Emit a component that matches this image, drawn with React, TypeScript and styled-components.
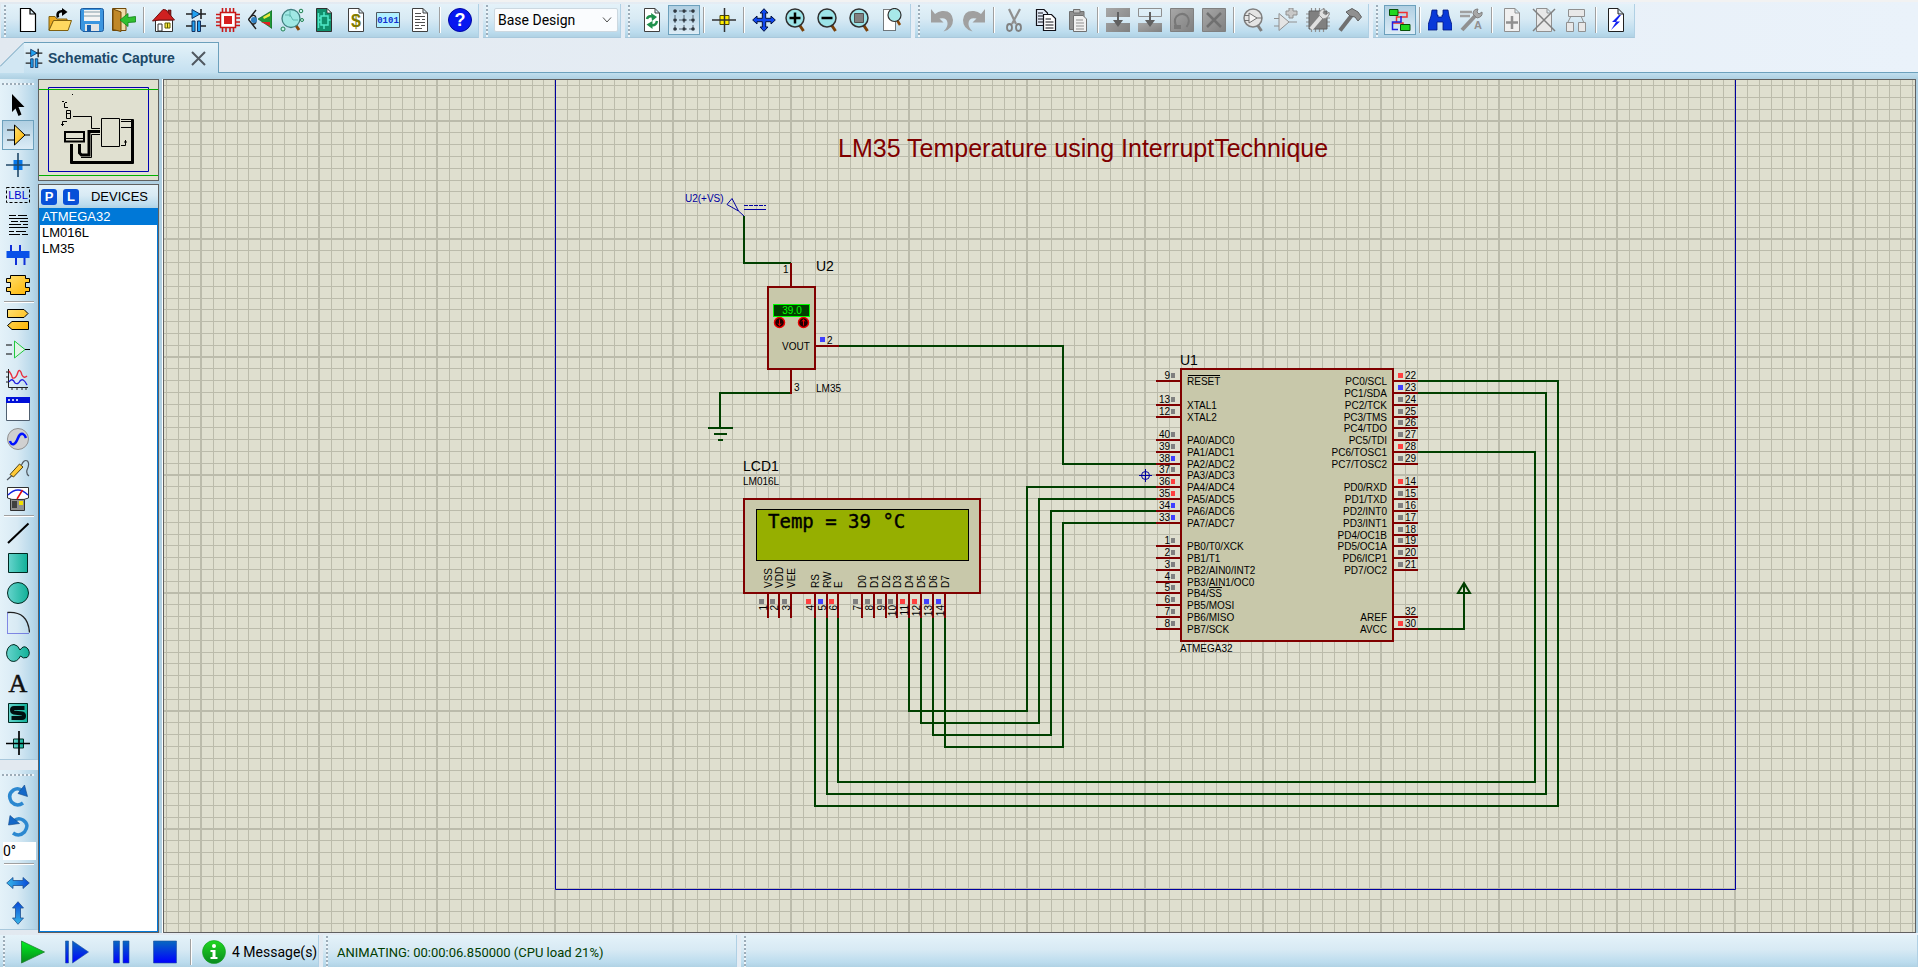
import React from "react";
import styled, { createGlobalStyle, css } from "styled-components";

const UI = `"Roboto", "Open Sans", sans-serif`;
const ARIAL = `"Liberation Sans", Arial, sans-serif`;
const WIRE = "#004000";
const PIN = "#800000";
const BODY = "#c8c8aa";
const MARK = "#0000a0";

const GlobalStyle = createGlobalStyle`
  * { box-sizing: border-box; }
  html, body { margin: 0; padding: 0; }
  body { background: #e3eaf1; font-family: ${UI}; color: #000; }
  button, input, select { font: inherit; color: inherit; margin: 0; }
`;

/* ---------- icons ---------- */

const Glyph = styled.svg`
  display: block;
  flex: none;
`;

type IconProps = { children: React.ReactNode; size?: number };
const Icon = ({ children, size = 24 }: IconProps) => (
  <Glyph width={size} height={size} viewBox="0 0 24 24" fill="none" aria-hidden="true">
    {children}
  </Glyph>
);

const HiddenDefs = styled.svg`
  position: absolute;
`;

const Defs = () => (
  <HiddenDefs width="0" height="0" aria-hidden="true">
    <defs>
      <linearGradient id="gold" x1="0" y1="0" x2="1" y2="1">
        <stop offset="0" stopColor="#ffe070" />
        <stop offset="1" stopColor="#ffb400" />
      </linearGradient>
      <linearGradient id="teal" x1="0" y1="0" x2="1" y2="0">
        <stop offset="0" stopColor="#66d4cc" />
        <stop offset="1" stopColor="#10b098" />
      </linearGradient>
      <linearGradient id="azure" x1="0" y1="0" x2="1" y2="0">
        <stop offset="0" stopColor="#38b8e8" />
        <stop offset="1" stopColor="#0848d8" />
      </linearGradient>
      <linearGradient id="azureUp" x1="0" y1="1" x2="0" y2="0">
        <stop offset="0" stopColor="#38b8e8" />
        <stop offset="1" stopColor="#0848d8" />
      </linearGradient>
      <linearGradient id="play" x1="0" y1="0" x2="0" y2="1">
        <stop offset="0" stopColor="#00f020" />
        <stop offset="1" stopColor="#08881c" />
      </linearGradient>
      <linearGradient id="blue" x1="0" y1="0" x2="0" y2="1">
        <stop offset="0" stopColor="#0868c0" />
        <stop offset="1" stopColor="#0000ff" />
      </linearGradient>
      <linearGradient id="info" x1="0" y1="0" x2="0" y2="1">
        <stop offset="0" stopColor="#20d820" />
        <stop offset="1" stopColor="#0a8a20" />
      </linearGradient>
      <linearGradient id="grey" x1="0" y1="0" x2="1" y2="1">
        <stop offset="0" stopColor="#a8a8a8" />
        <stop offset="1" stopColor="#808080" />
      </linearGradient>
    </defs>
  </HiddenDefs>
);

const Sheet = ({ stroke = "#404040", fill = "#fff" }) => (
  <path d="M4.500 .5H15L19.500 5V23.500H4.500ZM15 .5V5H19.500" fill={fill} stroke={stroke} />
);

const Lens = ({ fill = "#9ce4e8", stroke = "#303030", handle = "#7a4008" }) => (
  <>
    <path d="M15.500 17L19.500 23" stroke={handle} strokeWidth="3" />
    <circle cx="11" cy="10" r="9" fill={fill} stroke={stroke} strokeWidth="1.500" />
  </>
);

const icons: Record<string, React.ReactNode> = {
  newFile: <path d="M4.500 .5H14L19.500 6V23.500H4.500ZM14 .5V6H19.500" fill="#fff" stroke="#000" strokeWidth="1.200" />,
  open: (
    <>
      <path d="M1 22V8.500H7L9 11H19V13H5.500Z" fill="#e8a820" stroke="#806010" />
      <path d="M1 22.500L5.500 12.500H23.500L20 22.500Z" fill="#ffd860" stroke="#806010" />
      <path d="M10 9.500C8.500 5 11 2.500 15.500 3.500" stroke="#000" strokeWidth="2.500" />
      <path d="M14 0L19.500 4L14 8Z" fill="#000" />
    </>
  ),
  save: (
    <>
      <path d="M.5 2.500Q.5 .5 2.500 .5H21.500Q23.500 .5 23.500 2.500V21.500Q23.500 23.500 21.500 23.500H3L.5 21Z" fill="#3c96e0" stroke="#1c5ca0" />
      <path d="M4 2H20V13H4Z" fill="#f4f4f4" />
      <path d="M4 4H20M4 8H20" stroke="#a8b8c0" strokeWidth="1.500" />
      <path d="M5 16H19V23H5Z" fill="#e4e4e4" />
      <path d="M7 17H11V23H7Z" fill="#1860b0" />
    </>
  ),
  exit: (
    <>
      <path d="M.5 .5H14V22.500H.5Z" fill="#f0dca8" stroke="#704808" />
      <path d="M1 1L9 4V23.500L1 21.500Z" fill="#c08828" stroke="#704808" />
      <path d="M8 12L16 5.500V9.500L23.500 8.500V14L16 14.500V18.500Z" fill="#30c030" stroke="#108018" strokeWidth=".8" />
    </>
  ),
  home: (
    <>
      <path d="M16 2H19V9H16Z" fill="#902020" stroke="#400" strokeWidth=".6" />
      <path d="M3.500 12H20.500V23.500H3.500Z" fill="#fff" stroke="#303030" />
      <path d="M.5 13L11 1.500L14 2L22.500 12H7Z" fill="#d02020" stroke="#701010" />
      <path d="M6 16H10V23H6Z" fill="#fff" stroke="#303030" />
      <path d="M13 15H18V20H13ZM15.500 15V20" fill="#f8e840" stroke="#606000" />
    </>
  ),
  schematic: (
    <>
      <path d="M2 6H22M2 18H8.500M16 18H22" stroke="#202020" strokeWidth="1.500" />
      <path d="M8 1.500L16 6L8 10.500Z" fill="#20a0f0" stroke="#103060" />
      <path d="M17 1V11" stroke="#202020" strokeWidth="1.600" />
      <path d="M8 13H11V23.500H8ZM13.500 13H16.500V23.500H13.500Z" fill="#20a0f0" stroke="#103060" />
    </>
  ),
  chip: (
    <>
      <path d="M6.500 0V24M10 0V24M14 0V24M17.500 0V24M0 6.500H24M0 10H24M0 14H24M0 17.500H24" stroke="#c81818" strokeWidth="1.600" />
      <path d="M4.500 4.500H19.500V19.500H4.500Z" fill="#fff" stroke="#c81818" strokeWidth="1.500" />
      <path d="M8 8H16V16H8Z" fill="#d82020" />
    </>
  ),
  view3d: (
    <>
      <path d="M8 2L.5 11.500L8 21M3 8.500Q8 5 8 12Q8 18 3 15" stroke="#202020" strokeWidth="1.400" />
      <circle cx="6" cy="12" r="3" fill="#3080c0" />
      <path d="M10 11L24 2.500V20.500Z" fill="#209838" stroke="#0c5018" strokeWidth=".6" />
      <path d="M15 9L22 5V8L16 11Z" fill="#f0e840" />
      <path d="M13 14H22V18Z" fill="#e02020" />
    </>
  ),
  gerber: (
    <>
      <path d="M15 16L19 22" stroke="#8a4808" strokeWidth="3" />
      <circle cx="11" cy="10.500" r="9" fill="#a0e8e4" stroke="#408080" strokeWidth="1.300" />
      <path d="M5 7H10L13 12H18M10 3V9" stroke="#60b8b0" />
      <g fill="#c8f4ec" stroke="#208050">
        <circle cx="3" cy="21" r="2" />
        <circle cx="21" cy="3" r="1.800" />
        <circle cx="22" cy="12" r="1.500" />
      </g>
    </>
  ),
  pcb: (
    <>
      <path d="M4.500 .5H15L19.500 5V23.500H4.500Z" fill="#10906c" stroke="#303030" />
      <path d="M15 .5V5H19.500Z" fill="#fff" stroke="#303030" strokeWidth=".8" />
      <path d="M9 8H16V17H9ZM6.500 5V20M9 10H6.500M9 14H6.500M12 8V4M12 17V21M16 12H18.500" stroke="#50e8c8" strokeWidth="1.500" />
    </>
  ),
  bom: (
    <>
      <Sheet />
      <text x="12" y="19" textAnchor="middle" fontFamily="Liberation Sans" fontWeight="700" fontSize="18" fill="#847c00">$</text>
    </>
  ),
  source: (
    <>
      <path d="M.5 4.500H23.500V19.500H.5Z" fill="#b0f0ff" stroke="#505860" />
      <text x="12" y="15" textAnchor="middle" fontFamily="Liberation Mono" fontWeight="700" fontSize="9" fill="#1030d0">0101</text>
    </>
  ),
  report: (
    <>
      <Sheet />
      <path d="M7 5.500H13M7 8.500H17M7 11.500H12M14 11.500H17M7 14.500H17M7 17.500H11M13 17.500H17M7 20.500H14" stroke="#505050" />
    </>
  ),
  help: (
    <>
      <circle cx="12" cy="12" r="11.500" fill="#0818f0" stroke="#0008a0" />
      <text x="12" y="18" textAnchor="middle" fontFamily="Liberation Sans" fontWeight="700" fontSize="18" fill="#fff">?</text>
    </>
  ),
  refresh: (
    <>
      <Sheet />
      <path d="M7 11Q8 7.500 12 8.500M17 13Q16 18 11.500 17" stroke="#20904c" strokeWidth="2.500" />
      <path d="M11 5L17 9L12 13ZM12.500 13L6.500 16.500L12.500 21Z" fill="#20904c" />
    </>
  ),
  grid: (
    <>
      <path d="M2 3H22M2 12H22M2 21H22M3 2V22M12 2V22M21 2V22" stroke="#506070" strokeDasharray="3 2" />
      <g fill="#303840">
        {[3, 12, 21].map((x) => [3, 12, 21].map((y) => <circle key={`${x}-${y}`} cx={x} cy={y} r="1.800" />))}
      </g>
    </>
  ),
  origin: (
    <>
      <path d="M8 7.500H17V16.500H8Z" fill="#ffee00" stroke="#504800" />
      <path d="M0 12H24M12.500 0V24" stroke="#303030" strokeWidth="1.500" />
    </>
  ),
  pan: <path d="M12 .7L16 5H13.700V10.300H19V8L23.300 12L19 16V13.700H13.700V19H16L12 23.300L8 19H10.300V13.700H5V16L.7 12L5 8V10.300H10.300V5H8Z" fill="#1048f0" stroke="#001040" />,
  zoomIn: (
    <>
      <Lens />
      <path d="M5.500 10H16.500M11 4.500V15.500" stroke="#000" strokeWidth="2.500" />
    </>
  ),
  zoomOut: (
    <>
      <Lens />
      <path d="M5.500 10H16.500" stroke="#000" strokeWidth="2.500" />
    </>
  ),
  zoomAll: (
    <>
      <Lens />
      <path d="M6.500 5.500H15.500V14.500H6.500Z" fill="#808080" stroke="#505050" />
    </>
  ),
  zoomArea: (
    <>
      <path d="M3.500 1.500H15.500V22.500H3.500Z" fill="#fff" stroke="#000" strokeDasharray="1 1" />
      <path d="M17 12L20 17" stroke="#8a4808" strokeWidth="2.500" />
      <circle cx="14.500" cy="7" r="6.500" fill="#a8e8e8" stroke="#303030" strokeWidth="1.200" />
    </>
  ),
  undo: <path d="M1 1V14.500H13.500L9.500 10.500Q17 9 17.500 15Q18 19 13.500 23.500Q23 21 23 12Q22 2 12 3Q8 3.500 5 6Z" fill="#a0a0a0" />,
  redo: <path d="M23 1V14.500H10.500L14.500 10.500Q7 9 6.500 15Q6 19 10.500 23.500Q1 21 1 12Q2 2 12 3Q16 3.500 19 6Z" fill="#a0a0a0" />,
  cut: (
    <>
      <path d="M7 1L14 16M18 1L10 16" stroke="#909090" strokeWidth="2.200" />
      <ellipse cx="7.500" cy="19.500" rx="2.500" ry="3.500" stroke="#808080" strokeWidth="1.800" />
      <ellipse cx="16.500" cy="19.500" rx="2.500" ry="3.500" stroke="#808080" strokeWidth="1.800" />
    </>
  ),
  copy: (
    <>
      <path d="M2.500 1.500H10L13.500 5V17.500H2.500Z" fill="#e4ecf8" stroke="#101018" strokeWidth="1.200" />
      <path d="M4 5H9M4 8H9M4 11H9M4 14H9" stroke="#101018" />
      <path d="M9.500 6.500H17.500L21.500 10.500V22.500H9.500Z" fill="#fff" stroke="#101018" strokeWidth="1.200" />
      <path d="M11.500 11H17M11.500 14H19.500M11.500 17H19.500M11.500 20H19.500" stroke="#101018" />
    </>
  ),
  paste: (
    <>
      <path d="M3.500 3.500H18V21.500H3.500Z" fill="#909090" stroke="#707070" />
      <path d="M7.500 1.500H14V5H7.500Z" fill="#c0c0c0" stroke="#707070" />
      <path d="M7.500 7.500H17L20.500 11V23.500H7.500Z" fill="#f0f0f0" stroke="#707070" />
      <path d="M10 12H17M10 15H18M10 18H18M10 21H18" stroke="#909090" />
    </>
  ),
  blockCopy: (
    <>
      <path d="M0 0H24V9H0ZM0 15H24V24H0Z" fill="url(#grey)" />
      <path d="M12 4V14" stroke="#606060" strokeWidth="2" />
      <path d="M7 12H17L12 19Z" fill="#606060" />
    </>
  ),
  blockMove: (
    <>
      <path d="M.5 .5H23.500V8.500H.5Z" stroke="#909090" />
      <path d="M0 15H24V24H0Z" fill="url(#grey)" />
      <path d="M12 4V14" stroke="#606060" strokeWidth="2" />
      <path d="M7 12H17L12 19Z" fill="#606060" />
    </>
  ),
  blockRotate: (
    <>
      <path d="M.5 .5H23.500V23.500H.5Z" fill="url(#grey)" stroke="#808080" />
      <path d="M7 19.500Q3 13 6.500 8.500Q12 3.500 17 8Q21 13 16.500 19" stroke="#787878" strokeWidth="2" />
      <path d="M4 17H11V21H4Z" fill="#787878" />
    </>
  ),
  blockDelete: (
    <>
      <path d="M.5 .5H23.500V23.500H.5Z" fill="url(#grey)" stroke="#808080" />
      <path d="M5 5L19 19M19 5L5 19" stroke="#707070" strokeWidth="2.500" />
    </>
  ),
  pick: (
    <>
      <Lens fill="#e4e4e4" stroke="#808080" handle="#808080" />
      <path d="M7 5V15L15 10ZM2 7.500H7M2 12.500H7M15 10H20" fill="#f4f4f4" stroke="#707070" />
    </>
  ),
  make: (
    <>
      <path d="M5 5.500V22.500L15 14ZM0 10.500H5M0 18H5M15 14H23" fill="#e4e4e4" stroke="#909090" />
      <path d="M15 0H19V3H23V7H19V10H15V7H12V3H15Z" fill="#c8c8c8" stroke="#909090" />
    </>
  ),
  packaging: (
    <>
      <path d="M5.500 0V24M9.500 0V24M13.500 0V24M17.500 0V24M0 6H24M0 10H24M0 14H24M0 18H24" stroke="#909090" strokeWidth="1.200" />
      <path d="M3 3H21V21H3Z" fill="#808080" stroke="#606060" />
      <path d="M5 21L16 8" stroke="#e0e0e0" strokeWidth="4" />
      <path d="M13 7Q13 1 19 1L17 5L20 7L23 4Q24 10 17 11Z" fill="#e0e0e0" stroke="#909090" />
    </>
  ),
  hammer: (
    <>
      <path d="M2 22.500L14 7" stroke="#707070" strokeWidth="4" />
      <path d="M8 4L14 .5L20 4L23.500 9L20 13L17 9L12 8Z" fill="#909090" stroke="#606060" />
    </>
  ),
  autoroute: (
    <>
      <path d="M9 4.500H19V9H8.500V14M4 15H15V19" stroke="#f03030" strokeWidth="1.500" />
      <path d="M13 8V14H4.500V21.500H10" stroke="#2020e0" strokeWidth="1.500" />
      <path d="M1.500 1.500H10V7.500H1.500ZM12.500 16.500H22V22.500H12.500Z" fill="#20d820" stroke="#085008" />
    </>
  ),
  search: (
    <path d="M4 2H9V7H10V9H14V7H15V2H20L21 8L24 17V22H15V14H9V22H0V17L3 8Z" fill="#0838d8" stroke="#001880" strokeWidth=".8" />
  ),
  property: (
    <>
      <path d="M0 4H12M0 8H10" stroke="#a0a0a0" strokeWidth="2.500" />
      <path d="M2 22L16 7" stroke="#909090" strokeWidth="4" />
      <path d="M13 6Q13 1 18 1L17 4L19 6L22 4Q23 9 17 10Z" fill="#a8a8a8" stroke="#808080" />
      <text x="18" y="21" textAnchor="middle" fontFamily="Liberation Sans" fontWeight="700" fontSize="11" fill="#909090">A</text>
    </>
  ),
  sheetAdd: (
    <>
      <Sheet stroke="#909090" fill="#f0f0f0" />
      <path d="M12 8V21M6 14.500H18" stroke="#909090" strokeWidth="2.500" />
    </>
  ),
  sheetRemove: (
    <>
      <Sheet stroke="#909090" fill="#e8e8e8" />
      <path d="M1 1L23 23M23 1L1 23" stroke="#808080" strokeWidth="1.500" />
    </>
  ),
  hierarchy: (
    <g fill="#e8e8e8" stroke="#909090">
      <path d="M7 8L3.500 15M17 8L20 15" />
      <path d="M4.500 1.500H20.500V8.500H4.500ZM2.500 14.500H9.500V23.500H2.500ZM14.500 14.500H21.500V23.500H14.500Z" />
    </g>
  ),
  erc: (
    <>
      <path d="M4.500 .5H14L19.500 6V23.500H4.500ZM14 .5V6H19.500" fill="#fff" stroke="#202020" />
      <path d="M15 7L8 14H12L7 22L16 13.500H12L17 7Z" fill="#1020f0" />
    </>
  ),
  pointer: <path d="M6 1L18.500 14H12.500L15.500 21.500L12.500 23L9.500 15.500L6 19Z" fill="#000" />,
  component: (
    <>
      <path d="M1 7H8M1 17H8M19 12H24" stroke="#000" />
      <path d="M8.500 2V22L19 12Z" fill="url(#gold)" stroke="#000" />
    </>
  ),
  junction: (
    <>
      <path d="M7.500 7H16.500V17H7.500Z" fill="#0878e8" />
      <path d="M0 12H24M12 0V24" stroke="#204868" strokeWidth="1.600" />
    </>
  ),
  label: (
    <>
      <path d="M.5 4.500H23.500V19.500H.5Z" stroke="#000" strokeDasharray="3 2" />
      <text x="12" y="16" textAnchor="middle" fontFamily="Liberation Sans" fontSize="11" fill="#0000d0">LBL</text>
    </>
  ),
  script: <path d="M3 2.500H10M12 2.500H21M3 5.500H22M5 8.500H12M14 8.500H22M3 11.500H15M17 11.500H22M3 14.500H22M3 18.500H8M10 18.500H20M3 21.500H14M16 21.500H22" stroke="#000" />,
  bus: (
    <>
      <path d="M5 2V9M14 2V9M10 15V22M18.500 15V22" stroke="#1030d8" strokeWidth="2" />
      <path d="M.5 8H23.500V15H.5Z" fill="#0850e8" />
    </>
  ),
  subcircuit: <path d="M4.500 2.500H19.500V5.500H23.500V9.500H19.500V14.500H23.500V18.500H19.500V21.500H4.500V18.500H.5V14.500H4.500V9.500H.5V5.500H4.500Z" fill="url(#gold)" stroke="#000" />,
  terminal: (
    <path d="M1.500 2.500H18L22 6.500L18 10.500H1.500ZM22.500 14.500H6L1.500 18.500L6 22.500H22.500Z" fill="url(#gold)" stroke="#000" />
  ),
  devicePin: (
    <>
      <path d="M0 8H6M0 17H6M19 12.500H24" stroke="#000" />
      <path d="M8.500 4V21L19 12.500Z" fill="#e0f4e8" stroke="#20c840" />
    </>
  ),
  graph: (
    <>
      <path d="M2.500 2V20.500H22M0 5H3M0 10H3M0 15H3M6 20V23M11 20V23M16 20V23M20 20V23" stroke="#202020" />
      <path d="M3 4Q6 8 6.500 11Q10 12 12 5Q14 1 16 8Q18 12 21 9" stroke="#e83040" strokeWidth="1.400" />
      <path d="M3 15Q6 10 9 16Q12 18 14 14Q17 10 21 18" stroke="#2020e0" strokeWidth="1.400" />
    </>
  ),
  popup: (
    <>
      <path d="M.5 .5H23.500V23.500H.5Z" fill="#fff" stroke="#506070" />
      <path d="M0 0H24V6H0Z" fill="#0010d8" />
      <g fill="#fff">
        <circle cx="3" cy="3" r="1" />
        <circle cx="7" cy="3" r="1" />
        <circle cx="11" cy="3" r="1" />
      </g>
    </>
  ),
  generator: (
    <>
      <circle cx="12" cy="12" r="10.500" fill="#d0d0d0" stroke="#909090" />
      <path d="M4 14Q5 18 8 17Q10 16 12 11Q14 6 17 7Q19 8 20 11" stroke="#0010ff" strokeWidth="2.500" />
    </>
  ),
  probe: (
    <>
      <path d="M4 17.500L13.500 7L17 10L7.500 20Z" fill="url(#gold)" stroke="#504010" />
      <path d="M1 23L6 18.500M15.500 8Q18 2 21.500 4Q24 7 21 13Q20 17 23 19" stroke="#505860" strokeWidth="1.200" />
    </>
  ),
  instrument: (
    <>
      <path d="M4.500 11H18.500V23.500H4.500Z" fill="#909090" stroke="#303030" />
      <path d="M1.500 .5H22.500V11Q19 13 12 12.500Q5 13 1.500 11Z" fill="#fff" stroke="#303030" />
      <path d="M2 8Q12 -2 22 8" stroke="#1020e0" strokeWidth="1.300" />
      <path d="M11 12L16.500 3" stroke="#e81010" strokeWidth="1.500" />
      <path d="M6 14H11V21H6Z" fill="#404040" />
      <path d="M13 14H17V18H13Z" fill="#f0e000" />
    </>
  ),
  line: <path d="M2 22L22.500 2.500" stroke="#000" strokeWidth="2" />,
  box: <path d="M2.500 2.500H21.500V21.500H2.500Z" fill="url(#teal)" stroke="#002820" />,
  circle: <circle cx="12" cy="12" r="10.500" fill="url(#teal)" stroke="#002820" />,
  arc: (
    <>
      <path d="M1.500 1.500V22.500H23" stroke="#2020d0" strokeDasharray="1 1" />
      <path d="M1.500 1.500Q22 0 23.500 21.500" stroke="#202020" strokeWidth="1.300" />
    </>
  ),
  path2d: <path d="M14 9Q18 3 22 8Q25 13 21 16.500Q17 18 14.500 15Q11 22 5 20Q0 17 .7 11Q2 4 8 3.500Q12 4 14 9Z" fill="url(#teal)" stroke="#002820" />,
  text: <text x="12" y="21" textAnchor="middle" fontFamily="Liberation Serif" fontSize="26" stroke="#101010" strokeWidth=".5" fill="#101010">A</text>,
  symbol: (
    <>
      <path d="M2.500 2.500H21.500V21.500H2.500Z" fill="url(#teal)" stroke="#002820" />
      <path d="M18.500 7H8Q6 7 6 9Q6 11 8 11.500L16 12.500Q18 13 18 15Q18 17 16 17H5.500" stroke="#001010" strokeWidth="4" />
    </>
  ),
  marker: (
    <>
      <path d="M7.500 8H17.500V17H7.500Z" fill="url(#teal)" stroke="#002820" />
      <path d="M0 12.500H24M13 0V24" stroke="#000" strokeWidth="1.700" />
    </>
  ),
  rotateCw: (
    <>
      <path d="M17 19Q11 23.500 5.500 18Q1 10.500 7.500 6Q12 3 17 7" stroke="#2c88d0" strokeWidth="3.500" />
      <path d="M18.500 1L21.500 12.500L12 9.500Z" fill="#1468c8" stroke="#104888" strokeWidth=".6" />
    </>
  ),
  rotateCcw: (
    <>
      <path d="M7 19Q13 23.500 18.500 18Q24 10.500 17 6Q12 3 8 7" stroke="#2c88d0" strokeWidth="3.500" />
      <path d="M4 1.500L2.500 11L13.500 9.500Z" fill="#1468c8" stroke="#104888" strokeWidth=".6" />
    </>
  ),
  mirrorX: <path d="M.7 12L7 6.500V9.500H17V6.500L23.300 12L17 17.500V14.500H7V17.500Z" fill="url(#azure)" stroke="#205090" strokeWidth=".8" />,
  mirrorY: <path d="M12 .7L6.500 7H9.500V17H6.500L12 23.300L17.500 17H14.500V7H17.500Z" fill="url(#azureUp)" stroke="#205090" strokeWidth=".8" />,
  play: <path d="M.5 1L23.500 12L.5 23Z" fill="url(#play)" stroke="#208030" strokeWidth=".8" />,
  step: <path d="M.5 1H3.500V23H.5ZM7.500 1L23.500 12L7.500 23Z" fill="url(#blue)" stroke="#2050a0" strokeWidth=".6" />,
  pause: <path d="M4.500 1H10.500V23H4.500ZM14 1H20V23H14Z" fill="url(#blue)" stroke="#2050a0" strokeWidth=".6" />,
  stop: <path d="M.5 1H23.500V23H.5Z" fill="url(#blue)" stroke="#2050a0" strokeWidth=".6" />,
  info: (
    <>
      <circle cx="12" cy="12" r="11.500" fill="url(#info)" stroke="#10a020" strokeWidth=".6" />
      <circle cx="12" cy="6" r="2" fill="#fff" />
      <path d="M8.500 10H13.500V17H15.500V19H8.500V17H10.500V12H8.500Z" fill="#fff" />
    </>
  ),
};

/* ---------- chrome ---------- */

const Shell = styled.div`
  display: flex;
  flex-direction: column;
  min-height: 100vh;
  background: linear-gradient(90deg, #e2e9f0, #eaf2fa);
`;

const horizontalSheen = css`
  background: linear-gradient(180deg, #e4f2f9 0%, #d8eaf4 45%, #bcdcee 85%, #b0d2e4 100%);
`;

const TopBars = styled.header`
  display: flex;
  gap: 4px;
  padding: 2px 0 4px 1px;
  border-top: 2px solid #f2f2f2;
`;

const Bar = styled.div`
  display: flex;
  align-items: flex-start;
  height: 34px;
  padding: 1px 2px 0 0;
  border-right: 1px solid #b0d0e4;
  border-bottom: 1px solid #a8c8dc;
  ${horizontalSheen}
`;

const Grip = styled.span`
  flex: none;
  width: 2px;
  height: 32px;
  margin: 0 6px 0 3px;
  background: repeating-linear-gradient(180deg, #9cacb8 0 2px, #eef5fa 2px 4px);
`;

const Divider = styled.span`
  flex: none;
  width: 2px;
  height: 26px;
  margin: 2px 3px;
  background: linear-gradient(90deg, #a0a0a0 50%, #fff 50%);
`;

const ToolButton = styled.button<{ $active?: boolean; $wide?: boolean }>`
  flex: none;
  display: flex;
  align-items: center;
  justify-content: center;
  width: ${(p) => (p.$wide ? 44 : 32)}px;
  height: 30px;
  padding: 0;
  border: 1px solid ${(p) => (p.$active ? "#6ca0bc" : "transparent")};
  background: ${(p) => (p.$active ? "linear-gradient(180deg, #b0cfe2, #dcecf6)" : "none")};
`;

const DesignSelect = styled.span`
  position: relative;
  display: block;
  margin-top: 3px;

  select {
    appearance: none;
    width: 124px;
    height: 24px;
    padding: 0 3px;
    border: 1px solid #ccd8e0;
    border-radius: 2px;
    background: #fafcfe;
    font-size: 14px;
  }
  svg {
    position: absolute;
    right: 6px;
    top: 8px;
    pointer-events: none;
  }
`;

const Tool = ({ name, active }: { name: string; active?: boolean }) => (
  <ToolButton type="button" aria-label={name} aria-pressed={active} $active={active}>
    <Icon>{icons[name]}</Icon>
  </ToolButton>
);

const renderTools = (names: string[], active?: string) =>
  names.map((n, i) => (n === "|" ? <Divider key={i} /> : <Tool key={i} name={n} active={n === active ? true : undefined} />));

const fileTools = ["newFile", "open", "save", "exit", "|", "home", "schematic", "chip", "view3d", "gerber", "pcb", "bom", "source", "report", "|", "help"];
const viewTools = ["refresh", "grid", "|", "origin", "|", "pan", "zoomIn", "zoomOut", "zoomAll", "zoomArea"];
const editTools = ["undo", "redo", "|", "cut", "copy", "paste", "|", "blockCopy", "blockMove", "blockRotate", "blockDelete", "|", "pick", "make", "packaging", "hammer"];
const designTools = ["autoroute", "|", "search", "property", "|", "sheetAdd", "sheetRemove", "hierarchy", "|", "erc"];

const TabRow = styled.nav`
  display: flex;
  height: 31px;
`;

const Tab = styled.div`
  display: flex;
  align-items: center;
  gap: 4px;
  padding: 0 11px 1px 0;
  border-top: 1px solid #6ca0bc;
  border-right: 1px solid #6ca0bc;
  background: linear-gradient(180deg, #e4f2f9, #c4e0f0);
  color: #1c4868;
  font: bold 14px ${ARIAL};
`;

const TabClose = styled.button`
  display: flex;
  padding: 0;
  margin-left: 10px;
  border: 0;
  background: none;
`;

const TabRest = styled.div`
  flex: 1;
  border-bottom: 1px solid #6ca0bc;
`;

const Strip = styled.div`
  height: 6px;
  background: linear-gradient(180deg, #c0deee, #aed0e2);
`;

const Workspace = styled.main`
  flex: 1;
  display: flex;
  padding-right: 2px;
  background: #b0d0e2;
`;

const SideTools = styled.div`
  display: flex;
  flex-direction: column;
  gap: 10px;
  width: 38px;
  background: #e2e9f0;
`;

const SideBar = styled.div`
  display: flex;
  flex-direction: column;
  padding: 0 4px 1px 2px;
  border-bottom: 1px solid #a8c8dc;
  background: linear-gradient(90deg, #e4f2f9 0%, #d8eaf4 45%, #b8d8ea 85%, #acccdf 100%);
`;

const SideGrip = styled.span`
  height: 2px;
  margin: 4px 0 5px;
  background: repeating-linear-gradient(90deg, #9cacb8 0 2px, #eef5fa 2px 4px);
`;

const SideDivider = styled.span<{ $tall?: boolean }>`
  height: 2px;
  margin: ${(p) => (p.$tall ? 3 : 1)}px 0;
  margin-left: 2px;
  background: linear-gradient(180deg, #a0a0a0 50%, #fff 50%);
`;

const AngleInput = styled.input`
  width: 33px;
  height: 18px;
  margin: 1px 0 0 1px;
  padding: 0;
  border: 0;
  background: #fff;
  font-size: 14px;
`;

const SidePanels = styled.aside`
  display: flex;
  flex-direction: column;
  gap: 3px;
  width: 121px;
`;

const Overview = styled.div`
  height: 102px;
  border: 1px solid #606060;
  background: #e0e0d0;

  svg {
    display: block;
  }
`;

const Devices = styled.section`
  flex: 1;
  display: flex;
  flex-direction: column;
  border: 1px solid #606060;
  font-family: ${ARIAL};
  font-size: 13px;
`;

const DevicesHead = styled.div`
  display: flex;
  align-items: center;
  gap: 6px;
  height: 23px;
  padding: 0 10px 0 2px;
  ${horizontalSheen}

  h2 {
    flex: 1;
    margin: 0;
    font: 13px ${ARIAL};
    text-align: right;
  }
`;

const LetterButton = styled.button`
  width: 16px;
  height: 16px;
  padding: 0;
  border: 0;
  border-radius: 3px;
  background: #0850d8;
  color: #fff;
  font: bold 13px/16px ${ARIAL};
`;

const DeviceList = styled.ul`
  flex: 1;
  margin: 0;
  padding: 0;
  list-style: none;
  border: 1px solid #0078d7;
  background: #fff;
`;

const DeviceItem = styled.li<{ $selected?: boolean }>`
  height: 16px;
  padding-left: 2px;
  line-height: 16px;
  background: ${(p) => (p.$selected ? "#0078d7" : "none")};
  color: ${(p) => (p.$selected ? "#fff" : "#000")};
`;

const Canvas = styled.section`
  flex: 1;
  min-width: 0;
  display: flex;
  margin-left: 4px;
  border: 1px solid #606060;
  box-shadow: -1px 0 #fff;
  background: #dfdfcf;

  svg {
    flex: 1;
    display: block;
    font-family: ${ARIAL};
    font-size: 10px;
  }
`;

const StatusRow = styled.footer`
  display: flex;
  gap: 4px;
  height: 34px;
  padding-top: 2px;
`;

const StatusBar = styled.div<{ $width?: number }>`
  display: flex;
  align-items: center;
  flex: ${(p) => (p.$width ? `0 0 ${p.$width}px` : "1")};
  padding-top: 2px;
  border-right: 1px solid #b0d0e4;
  ${horizontalSheen}
`;

const MessageButton = styled.button`
  display: flex;
  align-items: center;
  gap: 6px;
  padding: 0 0 0 7px;
  border: 0;
  background: none;
  font-size: 14px;
  white-space: nowrap;
`;

const SimText = styled.output`
  padding-left: 3px;
  color: #003c00;
  font-size: 13px;
  white-space: nowrap;
`;

/* ---------- overview thumbnail ---------- */

const OverviewMap = () => (
  <svg width="119" height="100" viewBox="39 80 119 100" fill="none" role="img" aria-label="Sheet overview">
    <path d="M48.500 87.500H148.500V171.500H48.500Z" stroke="#0000b0" />
    <path d="M39 89.500H158M39 175.500H158" stroke="#00b000" />
    <g stroke="#000">
      <path d="M72 94.500H73M62 101.500H64M65 102.500H67M64.500 103V107.500H68M66.500 110.500H70.500V118.500H66.500ZM67 113.500H70M73 116.500H91.500V128.500H100M67 121.500H62.500V126M61 124.500H64" />
      <path d="M65 132H84V141.500H65Z" strokeWidth="2" />
      <path d="M65 138.500H84M101.500 118.500H119.500V146.500H101.500Z" />
      <path d="M121 119.500H133.500V163.500H70.500V144M121 121.500H132M121 127.500H131M121 145.500H125.500V140M124 142H127" />
      <path d="M132 120V162H72V144" strokeWidth="2" />
      <path d="M79.500 144V153L81.500 155H89V131.500H100" strokeWidth="3" />
      <path d="M81 157.500H91.500V134.500H100" />
    </g>
  </svg>
);

/* ---------- schematic ---------- */

const levels: Record<string, string> = { g: "#808080", r: "#ff4040", b: "#4040ff" };
type McuPin = [y: number, num: string, label: string, level: string];

const leftPins: McuPin[] = [
  [381, "9", "RESET", "g"],
  [405, "13", "XTAL1", "g"],
  [417, "12", "XTAL2", "g"],
  [440, "40", "PA0/ADC0", "g"],
  [452, "39", "PA1/ADC1", "g"],
  [464, "38", "PA2/ADC2", "b"],
  [475, "37", "PA3/ADC3", "g"],
  [487, "36", "PA4/ADC4", "r"],
  [499, "35", "PA5/ADC5", "r"],
  [511, "34", "PA6/ADC6", "b"],
  [523, "33", "PA7/ADC7", "b"],
  [546, "1", "PB0/T0/XCK", "g"],
  [558, "2", "PB1/T1", "g"],
  [570, "3", "PB2/AIN0/INT2", "g"],
  [582, "4", "PB3/AIN1/OC0", "g"],
  [593, "5", "PB4/SS", "g"],
  [605, "6", "PB5/MOSI", "g"],
  [617, "7", "PB6/MISO", "g"],
  [629, "8", "PB7/SCK", "g"],
];

const rightPins: McuPin[] = [
  [381, "22", "PC0/SCL", "r"],
  [393, "23", "PC1/SDA", "b"],
  [405, "24", "PC2/TCK", "g"],
  [417, "25", "PC3/TMS", "g"],
  [428, "26", "PC4/TDO", "g"],
  [440, "27", "PC5/TDI", "g"],
  [452, "28", "PC6/TOSC1", "r"],
  [464, "29", "PC7/TOSC2", "g"],
  [487, "14", "PD0/RXD", "r"],
  [499, "15", "PD1/TXD", "g"],
  [511, "16", "PD2/INT0", "g"],
  [523, "17", "PD3/INT1", "g"],
  [535, "18", "PD4/OC1B", "g"],
  [546, "19", "PD5/OC1A", "g"],
  [558, "20", "PD6/ICP1", "g"],
  [570, "21", "PD7/OC2", "g"],
  [617, "32", "AREF", ""],
  [629, "30", "AVCC", "r"],
];

const lcdPins: [x: number, label: string, level: string][] = [
  [768, "VSS", "g"],
  [779, "VDD", "g"],
  [791, "VEE", "g"],
  [815, "RS", "r"],
  [827, "RW", "b"],
  [838, "E", "r"],
  [862, "D0", "g"],
  [874, "D1", "g"],
  [886, "D2", "g"],
  [897, "D3", "g"],
  [909, "D4", "r"],
  [921, "D5", "r"],
  [933, "D6", "b"],
  [945, "D7", "b"],
];

const wires = [
  "M744 216V263H791",
  "M791 393H720V428",
  "M839 346H1063V464H1157",
  "M909 618V711H1027V487H1157",
  "M921 618V723H1039V499H1157",
  "M933 618V735H1051V511H1157",
  "M945 618V747H1063V523H1157",
  "M815 618V806H1558V381H1418",
  "M827 618V794H1546V393H1418",
  "M838 618V782H1535V452H1418",
  "M1418 629H1464V583",
];

const minorX = [12, 24, 36, 47, 59, 71, 83, 95, 106];
const minorY = [12, 24, 36, 48, 60, 71, 83, 95, 107];

const Schematic = () => (
  <svg width="100%" role="img" aria-label="Schematic sheet">
    <defs>
      <pattern id="sheetGrid" patternUnits="userSpaceOnUse" x="200" y="120" width="118" height="118">
        <g fill="#bbbbab" shapeRendering="crispEdges">
          <rect width="2" height="118" />
          <rect width="118" height="2" />
          {minorX.map((x) => <rect key={x} x={x + 1} width="1" height="118" />)}
          {minorY.map((y) => <rect key={y} y={y} width="118" height="1" />)}
        </g>
      </pattern>
    </defs>
    <g transform="translate(-164 -80)">
      <rect x="164" y="80" width="100%" height="100%" fill="url(#sheetGrid)" />
      <path d="M555.500 80V889.500H1735.500V80" fill="none" stroke={MARK} />
      <text x="838" y="157" fontSize="25" fill={PIN}>LM35 Temperature using InterruptTechnique</text>

      <g fill="none" stroke={WIRE} strokeWidth="2">
        {wires.map((d) => <path key={d} d={d} />)}
        <path d="M708 428H733M714 434H727M718 440H723M1464 583L1458 593H1470Z" />
      </g>

      {/* supply generator */}
      <text x="685" y="202" fill={MARK}>U2(+VS)</text>
      <g fill="none" stroke={MARK}>
        <path d="M744 216L738.500 211L727 204.500L732 198.500L738.500 211" />
        <path d="M744 209.500H766" />
        <path d="M744 205.500H766" strokeDasharray="4 1" />
      </g>

      {/* temperature sensor */}
      <g stroke={PIN} strokeWidth="2">
        <path d="M791 263V287M791 369V394M816 346H839" />
        <rect x="768" y="287" width="47" height="82" fill={BODY} />
      </g>
      <rect x="773.500" y="304.500" width="36" height="12" fill="#004000" stroke="#00ff00" />
      <text x="792" y="314" textAnchor="middle" fill="#00ff00">39.0</text>
      <g fill="#200000" stroke="#e80000" strokeWidth="1.500">
        <circle cx="779.500" cy="322.500" r="5" />
        <circle cx="803.500" cy="322.500" r="5" />
        <path d="M779.500 319.500V325M778 323.500L779.500 325.500L781 323.500M803.500 325.500V320M802 321.500L803.500 319.500L805 321.500" strokeWidth="1" />
      </g>
      <text x="782" y="350">VOUT</text>
      <text x="783" y="273">1</text>
      <text x="827" y="344">2</text>
      <text x="794" y="391">3</text>
      <rect x="820" y="337" width="5" height="5" fill={levels.b} />
      <text x="816" y="271" fontSize="14">U2</text>
      <text x="816" y="392">LM35</text>

      {/* display */}
      <text x="743" y="471" fontSize="14">LCD1</text>
      <text x="743" y="485">LM016L</text>
      <rect x="744" y="499" width="236" height="94" fill={BODY} stroke={PIN} strokeWidth="2" />
      <rect x="756.500" y="509.500" width="212" height="51" fill="#96af00" stroke="#000" />
      <text x="768" y="528" fontFamily="DejaVu Sans Mono, monospace" fontSize="19" fill="#000" stroke="#000" strokeWidth=".4">Temp = 39 °C</text>
      {lcdPins.map(([x, label, level], i) => (
        <g key={label}>
          <path d={`M${x} 594V618`} stroke={PIN} strokeWidth="2" />
          <rect x={x - 9} y="599" width="5" height="5" fill={levels[level]} />
          <text transform={`translate(${x + 4} 588) rotate(-90)`}>{label}</text>
          <text transform={`translate(${x - 1} 605) rotate(-90)`} textAnchor="end">{i + 1}</text>
        </g>
      ))}

      {/* microcontroller */}
      <text x="1180" y="365" fontSize="14">U1</text>
      <text x="1180" y="652">ATMEGA32</text>
      <rect x="1181" y="369" width="212" height="272" fill={BODY} stroke={PIN} strokeWidth="2" />
      {leftPins.map(([y, num, label, level]) => (
        <g key={num}>
          <path d={`M1156 ${y}H1181`} stroke={PIN} strokeWidth="2" />
          <rect x="1171" y={y - 8} width="4" height="5" fill={levels[level]} />
          <text x="1170" y={y - 2} textAnchor="end">{num}</text>
          <text x="1187" y={y + 4}>{label}</text>
        </g>
      ))}
      <path d="M1188 375.500H1220M1209 587.500H1222" stroke="#000" />
      {rightPins.map(([y, num, label, level]) => (
        <g key={num}>
          <path d={`M1393 ${y}H1418`} stroke={PIN} strokeWidth="2" />
          {level && <rect x="1398" y={y - 8} width="5" height="5" fill={levels[level]} />}
          <text x="1405" y={y - 2}>{num}</text>
          <text x="1387" y={y + 4} textAnchor="end">{label}</text>
        </g>
      ))}

      {/* origin marker */}
      <g fill="none" stroke={MARK}>
        <circle cx="1145.500" cy="475.500" r="4" />
        <path d="M1139 475.500H1152M1145.500 469V482" />
      </g>
    </g>
  </svg>
);

export default function App() {
  return (
    <Shell>
      <GlobalStyle />
      <Defs />
      <TopBars>
        <Bar role="toolbar">
          <Grip />
          {renderTools(fileTools)}
        </Bar>
        <Bar>
          <Grip />
          <DesignSelect>
            <select aria-label="Design variant" defaultValue="Base Design">
              <option>Base Design</option>
            </select>
            <svg width="10" height="8" viewBox="0 0 10 8" fill="none" aria-hidden="true">
              <path d="M1 1.500L5 6L9 1.500" stroke="#505050" />
            </svg>
          </DesignSelect>
        </Bar>
        <Bar role="toolbar">
          <Grip />
          {renderTools(viewTools, "grid")}
        </Bar>
        <Bar role="toolbar">
          <Grip />
          {renderTools(editTools)}
        </Bar>
        <Bar role="toolbar">
          <Grip />
          {renderTools(designTools, "autoroute")}
        </Bar>
      </TopBars>

      <TabRow>
        <Glyph width="24" height="31" viewBox="0 0 24 31" aria-hidden="true">
          <path d="M0 24.500L24 .5V31H0Z" fill="#d2e7f3" />
          <path d="M0 24.500L24 .5" stroke="#6ca0bc" />
        </Glyph>
        <Tab>
          <Icon size={20}>{icons.schematic}</Icon>
          <span>Schematic Capture</span>
          <TabClose type="button" aria-label="Close tab">
            <Glyph width="18" height="18" viewBox="0 0 18 18" fill="none">
              <path d="M3 3L16 16M16 3L3 16" stroke="#505860" strokeWidth="2" />
            </Glyph>
          </TabClose>
        </Tab>
        <TabRest />
      </TabRow>
      <Strip />

      <Workspace>
        <SideTools>
          <SideBar role="toolbar">
            <SideGrip />
            {["pointer", "component", "junction", "label", "script", "bus", "subcircuit"].map((n) => (
              <Tool key={n} name={n} active={n === "component" ? true : undefined} />
            ))}
            <SideDivider />
            {["terminal", "devicePin", "graph", "popup", "generator", "probe", "instrument"].map((n) => (
              <Tool key={n} name={n} />
            ))}
            <SideDivider />
            {["line", "box", "circle", "arc", "path2d", "text", "symbol", "marker"].map((n) => (
              <Tool key={n} name={n} />
            ))}
          </SideBar>
          <SideBar role="toolbar">
            <SideGrip />
            <Tool name="rotateCw" />
            <Tool name="rotateCcw" />
            <AngleInput aria-label="Rotation angle" defaultValue="0°" />
            <SideDivider $tall />
            <Tool name="mirrorX" />
            <Tool name="mirrorY" />
          </SideBar>
        </SideTools>

        <SidePanels>
          <Overview>
            <OverviewMap />
          </Overview>
          <Devices>
            <DevicesHead>
              <LetterButton type="button">P</LetterButton>
              <LetterButton type="button">L</LetterButton>
              <h2>DEVICES</h2>
            </DevicesHead>
            <DeviceList>
              <DeviceItem $selected>ATMEGA32</DeviceItem>
              <DeviceItem>LM016L</DeviceItem>
              <DeviceItem>LM35</DeviceItem>
            </DeviceList>
          </Devices>
        </SidePanels>

        <Canvas>
          <Schematic />
        </Canvas>
      </Workspace>

      <StatusRow>
        <StatusBar $width={319}>
          <Grip />
          {["play", "step", "pause", "stop"].map((n) => (
            <ToolButton key={n} type="button" aria-label={n} $wide>
              <Icon>{icons[n]}</Icon>
            </ToolButton>
          ))}
          <Divider />
          <MessageButton type="button">
            <Icon>{icons.info}</Icon>
            <span>4 Message(s)</span>
          </MessageButton>
        </StatusBar>
        <StatusBar $width={414}>
          <Grip />
          <SimText>ANIMATING: 00:00:06.850000 (CPU load 21%)</SimText>
        </StatusBar>
        <StatusBar>
          <Grip />
        </StatusBar>
      </StatusRow>
    </Shell>
  );
}
